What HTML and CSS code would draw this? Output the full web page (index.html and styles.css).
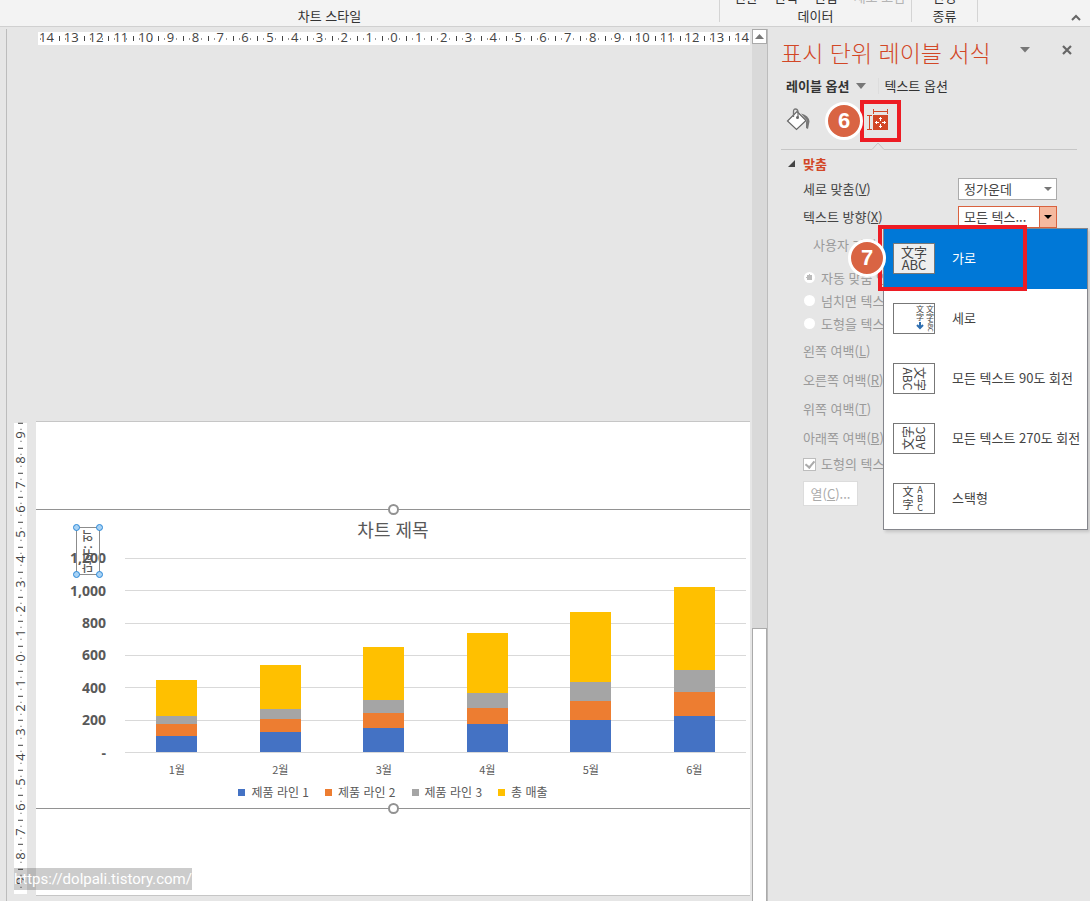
FILE: index.html
```html
<!DOCTYPE html>
<html lang="ko">
<head>
<meta charset="utf-8">
<title>표시 단위 레이블 서식</title>
<link rel="stylesheet" href="styles.css">
</head>
<body>
<header class="ribbon">
  <section class="group group-style"><span class="group-name">차트 스타일</span></section>
  <section class="group group-data">
    <div class="commands"><span>전환</span><span>선택</span><span>편집</span><span class="off">새로 고침</span></div>
    <span class="group-name">데이터</span>
  </section>
  <section class="group group-type">
    <div class="commands"><span>변경</span></div>
    <span class="group-name">종류</span>
  </section>
  <div class="ribbon-end">
    <button class="icon-button" aria-label="리본 메뉴 축소"><svg width="10" height="8" viewBox="0 0 10 8"><path d="M1 6l4-4 4 4" fill="none" stroke="#666" stroke-width="2"/></svg></button>
  </div>
</header>

<div class="workspace">
  <main class="editor">
    <div class="canvas">
      <div class="ruler-h"><div class="ruler-h-scale">
        <span>14</span><span>13</span><span>12</span><span>11</span><span>10</span><span>9</span><span>8</span><span>7</span><span>6</span><span>5</span><span>4</span><span>3</span><span>2</span><span>1</span><span>0</span><span>1</span><span>2</span><span>3</span><span>4</span><span>5</span><span>6</span><span>7</span><span>8</span><span>9</span><span>10</span><span>11</span><span>12</span><span>13</span><span>14</span>
      </div></div>
      <div class="stage">
        <div class="ruler-v">
          <span>9</span><span>8</span><span>7</span><span>6</span><span>5</span><span>4</span><span>3</span><span>2</span><span>1</span><span>0</span><span>1</span><span>2</span><span>3</span><span>4</span><span>5</span><span>6</span><span>7</span><span>8</span><span>9</span>
        </div>
        <div class="slide">
          <figure class="chart">
            <i class="grip grip-top"></i><i class="grip grip-bottom"></i>
            <figcaption class="chart-title">차트 제목</figcaption>
            <div class="plot">
              <div class="y-axis"><span>1,200</span><span>1,000</span><span>800</span><span>600</span><span>400</span><span>200</span><span>-</span></div>
              <div class="lines"><i></i><i></i><i></i><i></i><i></i><i></i></div>
              <div class="bars">
                <div class="bar"><i class="total" style="height:36px"></i><i class="line3" style="height:8px"></i><i class="line2" style="height:12px"></i><i class="line1" style="height:16px"></i></div>
                <div class="bar"><i class="total" style="height:44px"></i><i class="line3" style="height:10px"></i><i class="line2" style="height:13px"></i><i class="line1" style="height:20px"></i></div>
                <div class="bar"><i class="total" style="height:53px"></i><i class="line3" style="height:13px"></i><i class="line2" style="height:15px"></i><i class="line1" style="height:24px"></i></div>
                <div class="bar"><i class="total" style="height:60px"></i><i class="line3" style="height:15px"></i><i class="line2" style="height:16px"></i><i class="line1" style="height:28px"></i></div>
                <div class="bar"><i class="total" style="height:70px"></i><i class="line3" style="height:19px"></i><i class="line2" style="height:19px"></i><i class="line1" style="height:32px"></i></div>
                <div class="bar"><i class="total" style="height:83px"></i><i class="line3" style="height:22px"></i><i class="line2" style="height:24px"></i><i class="line1" style="height:36px"></i></div>
              </div>
              <div class="x-axis"><span>1월</span><span>2월</span><span>3월</span><span>4월</span><span>5월</span><span>6월</span></div>
            </div>
            <ul class="legend">
              <li><i class="line1"></i>제품 라인 1</li><li><i class="line2"></i>제품 라인 2</li><li><i class="line3"></i>제품 라인 3</li><li><i class="total"></i>총 매출</li>
            </ul>
            <div class="unit-label"><span>단위: 억</span><i class="knob tl"></i><i class="knob tr"></i><i class="knob bl"></i><i class="knob br"></i></div>
          </figure>
        </div>
      </div>
      <a class="watermark" href="https://dolpali.tistory.com/">https://dolpali.tistory.com/</a>
    </div>
    <div class="scrollbar">
      <button class="scroll-up" aria-label="위로"><svg width="9" height="5" viewBox="0 0 9 5"><path d="M0 5l4.500-5L9 5z" fill="#777"/></svg></button>
      <div class="thumb"></div>
    </div>
  </main>

  <aside class="pane">
    <div class="pane-head">
      <h1>표시 단위 레이블 서식</h1>
      <button class="icon-button" aria-label="작업 창 옵션"><svg width="10" height="6" viewBox="0 0 10 6"><path d="M0 0h10L5 5.500z" fill="#777"/></svg></button>
      <button class="icon-button close" aria-label="닫기"><svg width="10" height="10" viewBox="0 0 10 10"><path d="M1 1l8 8M9 1l-8 8" stroke="#666" stroke-width="2.200"/></svg></button>
    </div>
    <nav class="tabs">
      <button class="tab active">레이블 옵션 <svg width="10" height="6" viewBox="0 0 10 6"><path d="M0 0h10L5 6z" fill="#777"/></svg></button>
      <button class="tab">텍스트 옵션</button>
    </nav>
    <div class="tools">
      <button class="icon-button" aria-label="채우기 및 선"><svg width="24" height="24" viewBox="0 0 24 24"><path d="M11 3.500L20 12.500l-9.500 9L1.500 13z" fill="#fff" stroke="#666" stroke-width="1.200"/><path d="M7.500 9V3.500Q7.500 1 9.500 1t2.500 2.500V9" fill="none" stroke="#777" stroke-width="1.300"/><circle cx="11.500" cy="9.500" r="1.500" fill="#666"/><path d="M15 5.500q8 2 8.500 8l-1.500 7.500-2-1v-6.500l1-1z" fill="#777"/></svg></button>
      <span class="badge">6</span>
      <button class="icon-button marked" aria-label="크기 및 속성"><svg width="22" height="22" viewBox="0 0 22 22"><path d="M6.500 0v5M20.500 0v5M7 2.500h13M0 6.500h5M0 20.500h5M2.500 7v13" fill="none" stroke="#d24726"/><rect x="6" y="6" width="15" height="15" fill="#d24726"/><path d="M13.500 8v4M13.500 15v4M8 13.500h4M15 13.500h4M12 9.500h3M12 17.500h3M9.500 12v3M17.500 12v3" fill="none" stroke="#fff"/></svg></button>
    </div>
    <div class="divider"><svg width="14" height="8" viewBox="0 0 14 8"><path d="M1 7.500L7 1l6 6.500" fill="#e6e6e6" stroke="#c6c6c6"/><path d="M1.500 8h11" stroke="#e6e6e6"/></svg></div>
    <h2><svg width="8" height="8" viewBox="0 0 8 8"><path d="M7 0v7H0z" fill="#444"/></svg>맞춤</h2>
    <form class="fields">
      <div class="field">
        <label for="valign">세로 맞춤(<u>V</u>)</label>
        <div class="picker"><select id="valign"><option>정가운데</option></select></div>
      </div>
      <div class="field">
        <label for="direction">텍스트 방향(<u>X</u>)</label>
        <div class="picker open">
          <select id="direction"><option>모든 텍스...</option></select>
          <div class="menu" role="listbox" aria-label="텍스트 방향">
            <button type="button" class="choice selected" role="option"><svg width="42" height="31" viewBox="0 0 42 31"><rect x=".5" y=".5" width="41" height="30"/><text x="21" y="14" font-size="13">文字</text><text x="21" y="27" font-size="13">ABC</text></svg>가로</button>
            <button type="button" class="choice" role="option"><svg width="42" height="31" viewBox="0 0 42 31"><rect x=".5" y=".5" width="41" height="30"/><text x="27" y="9" font-size="8">文</text><text x="27" y="17" font-size="8">字</text><text x="37" y="9" font-size="8">文</text><text x="37" y="17" font-size="8">字</text><text transform="translate(35 23) rotate(90)" font-size="6">ABC</text><path d="M27 19v6M24 22l3 3 3-3" fill="none" stroke="#2f6fb0" stroke-width="2"/></svg>세로</button>
            <button type="button" class="choice" role="option"><svg width="42" height="31" viewBox="0 0 42 31"><rect x=".5" y=".5" width="41" height="30"/><text transform="translate(22 16) rotate(90)" font-size="12">文字</text><text transform="translate(10 16) rotate(90)" font-size="12">ABC</text></svg>모든 텍스트 90도 회전</button>
            <button type="button" class="choice" role="option"><svg width="42" height="31" viewBox="0 0 42 31"><rect x=".5" y=".5" width="41" height="30"/><text transform="translate(20 15) rotate(-90)" font-size="12">文字</text><text transform="translate(32 15) rotate(-90)" font-size="12">ABC</text></svg>모든 텍스트 270도 회전</button>
            <button type="button" class="choice" role="option"><svg width="42" height="31" viewBox="0 0 42 31"><rect x=".5" y=".5" width="41" height="30"/><text x="15" y="13" font-size="11">文</text><text x="15" y="26" font-size="11">字</text><text x="27" y="10" font-size="9">A</text><text x="27" y="19" font-size="9">B</text><text x="27" y="28" font-size="9">C</text></svg>스택형</button>
            <div class="callout"><span class="badge">7</span></div>
          </div>
        </div>
      </div>
      <div class="field off indent">사용자 지정</div>
      <div class="fit">
        <label><input type="radio" name="fit" checked disabled>자동 맞춤 안</label>
        <label><input type="radio" name="fit" disabled>넘치면 텍스트</label>
        <label><input type="radio" name="fit" disabled>도형을 텍스트</label>
      </div>
      <div class="margins">
        <span>왼쪽 여백(<u>L</u>)</span><span>오른쪽 여백(<u>R</u>)</span><span>위쪽 여백(<u>T</u>)</span><span>아래쪽 여백(<u>B</u>)</span>
      </div>
      <label class="wrap"><input type="checkbox" checked disabled>도형의 텍스트</label>
      <button type="button" class="columns" disabled>열(<u>C</u>)...</button>
    </form>
  </aside>
</div>
</body>
</html>
```
FILE: styles.css
```css
* { box-sizing: border-box; }

body {
  margin: 0;
  height: 100vh;
  display: flex;
  flex-direction: column;
  overflow: hidden;
  background: #e6e6e6;
  color: #444;
  font: 13px/20px "Noto Sans CJK KR", sans-serif;
}

button, select, input { font: inherit; color: inherit; margin: 0; }
button { padding: 0; border: 0; background: none; }
svg { display: block; flex: none; }
i { display: block; }

.icon-button { display: flex; }

/* Ribbon */
.ribbon {
  flex: none;
  display: flex;
  height: 27px;
  overflow: hidden;
  background: #f3f3f3;
  border-bottom: 1px solid #d0d0d0;
  color: #333;
}
.group {
  display: flex;
  flex-direction: column;
  justify-content: flex-end;
  align-items: center;
  margin-bottom: 4px;
  border-right: 1px solid #d4d4d4;
}
.group-name { line-height: 12px; }
.commands { display: flex; gap: 16px; margin-bottom: 3px; line-height: 20px; white-space: nowrap; }
.commands .off { color: #b4b4b4; }
.group-style { flex: 1; padding-right: 60px; }
.group-data { width: 192px; }
.group-data .commands { padding-left: 8px; }
.group-type { width: 66px; }
.ribbon-end { width: 112px; display: flex; justify-content: flex-end; align-items: flex-end; padding: 0 9px 4px 0; }

.workspace { flex: 1; display: flex; min-height: 0; }

/* Editor */
.editor {
  flex: 1;
  display: flex;
  min-width: 0;
  margin: 2px 0 0 6px;
  border: solid #bcbcbc;
  border-width: 0 1px;
}
.canvas {
  flex: 1;
  min-width: 0;
  position: relative;
  display: flex;
  flex-direction: column;
  justify-content: space-between;
  padding: 3px 2px 5px 7px;
}
.ruler-h { margin-left: 24px; height: 13px; overflow: hidden; background: #fff; }
.ruler-h-scale { display: grid; grid-template-columns: repeat(29, 1fr); margin: 0 -4px; }
.ruler-h span, .ruler-v span {
  display: flex;
  align-items: center;
  justify-content: center;
  font: 13px/13px "Open Sans", sans-serif;
}
.ruler-h span {
  height: 13px;
  padding-bottom: 2px;
  background:
    linear-gradient(#444, #444) 0 4px / 1px 5px no-repeat,
    linear-gradient(#999, #999) 25% 6px / 1px 2px no-repeat,
    linear-gradient(#999, #999) 75% 6px / 1px 2px no-repeat;
}
.stage { display: flex; gap: 9px; }
.ruler-v {
  width: 13px;
  margin: 2px 0 2px;
  display: grid;
  grid-template-rows: repeat(19, 1fr);
  background: #fff;
}
.ruler-v span {
  min-height: 0;
  writing-mode: vertical-rl;
  transform: rotate(180deg);
  background:
    linear-gradient(#444, #444) 4px 100% / 5px 1px no-repeat,
    linear-gradient(#999, #999) 5px 25% / 2px 1px no-repeat,
    linear-gradient(#999, #999) 5px 75% / 2px 1px no-repeat;
}
.slide {
  flex: 1;
  min-width: 0;
  padding: 87px 0 86px;
  background: #fff;
  border: solid #c6c6c6;
  border-width: 1px 0;
}

/* Chart */
.chart {
  position: relative;
  margin: 0;
  padding: 9px 4px 9px 34px;
  border: solid #929292;
  border-width: 1px 0;
  color: #595959;
}
.grip {
  position: absolute;
  left: calc(50% - 5px);
  width: 11px;
  height: 11px;
  border: 2px solid #929292;
  border-radius: 50%;
  background: #fff;
}
.grip-top { top: -6px; }
.grip-bottom { bottom: -6px; }
.chart-title { margin: 0 0 19px -30px; font-size: 18px; line-height: 20px; text-align: center; }
.plot { display: grid; grid-template: 195px 32px / 35px 1fr; column-gap: 20px; }
.y-axis {
  grid-area: 1 / 1;
  margin: -16px 0;
  display: grid;
  grid-template-rows: repeat(7, 1fr);
  align-items: center;
  justify-items: end;
  font: bold 14px/16px "Open Sans", sans-serif;
}
.lines { grid-area: 1 / 2; display: grid; grid-template-rows: repeat(6, 1fr); border-bottom: 1px solid #d9d9d9; }
.lines i { border-top: 1px solid #d9d9d9; }
.bars { grid-area: 1 / 2; display: grid; grid-template-columns: repeat(6, 1fr); justify-items: center; align-items: end; padding-bottom: 1px; }
.bar { width: 40%; }
.line1 { background: #4472c4; }
.line2 { background: #ed7d31; }
.line3 { background: #a5a5a5; }
.total { background: #ffc000; }
.x-axis { grid-area: 2 / 2; display: grid; grid-template-columns: repeat(6, 1fr); align-items: center; text-align: center; font-size: 11px; }
.legend { display: flex; justify-content: center; gap: 16px; margin: 0 0 0 -30px; padding: 0; list-style: none; font-size: 12px; line-height: 14px; }
.legend li { display: flex; align-items: center; gap: 6px; }
.legend i { width: 7px; height: 7px; }

.unit-label {
  position: absolute;
  left: 40px;
  top: 17px;
  width: 24px;
  height: 48px;
  display: grid;
  place-items: center;
  border: 1px solid #8c8c8c;
  font-size: 12px;
  line-height: 14px;
}
.unit-label span { writing-mode: vertical-rl; transform: rotate(180deg); font-weight: 500; white-space: nowrap; }
.knob { position: absolute; width: 7px; height: 7px; border: 1px solid #2b88d8; border-radius: 50%; background: #a9d3f5; }
.tl { left: -4px; top: -4px; }
.tr { right: -4px; top: -4px; }
.bl { left: -4px; bottom: -4px; }
.br { right: -4px; bottom: -4px; }

.watermark {
  position: absolute;
  left: 7px;
  bottom: 11px;
  background: rgba(0, 0, 0, .2);
  color: #fff;
  font: 15px/22px Roboto, sans-serif;
  text-decoration: none;
}

.scrollbar { width: 15px; display: flex; flex-direction: column; justify-content: space-between; background: #d9d9d9; }
.scroll-up { height: 15px; display: grid; place-items: center; border: 1px solid #aaa; background: #fff; }
.thumb { height: 273px; border: 1px solid #aaa; border-bottom: 0; background: #fff; }

/* Format pane */
.pane { flex: none; width: 322px; padding: 3px 13px 0; }
.pane-head { display: flex; align-items: center; height: 46px; padding-bottom: 6px; }
.pane-head h1 { flex: 1; margin: 4px 0 0; color: #d24726; font-size: 23px; font-weight: 300; line-height: 28px; }
.close { margin: 0 5px 0 32px; }
.tabs { display: flex; align-items: center; height: 20px; padding-left: 5px; color: #333; }
.tab { display: flex; align-items: center; gap: 7px; line-height: 16px; }
.tab + .tab { margin-left: 12px; padding-left: 5px; border-left: 1px solid #ddd; }
.active { font-weight: bold; }
.tools { display: flex; align-items: center; height: 42px; margin-top: 4px; padding-left: 5px; }
.tools > .icon-button:first-child { padding-bottom: 3px; }
.badge {
  flex: none;
  display: grid;
  place-items: center;
  width: 38px;
  height: 38px;
  border: 3px solid #fff;
  border-radius: 50%;
  background: #d96443;
  color: #fff;
  font: bold 22px/24px "Liberation Sans", sans-serif;
}
.tools .badge { margin: 0 -3px 0 15px; z-index: 1; }
.marked { width: 41px; height: 42px; align-items: center; justify-content: center; border: 4px solid #ed1c24; padding: 0 5px 2px 0; }
.divider { display: flex; align-items: flex-end; height: 8px; border-bottom: 1px solid #c6c6c6; }
.divider svg { margin: 0 0 -1px 90px; }
.pane h2 { display: flex; align-items: center; gap: 7px; height: 28px; margin: 0; padding-left: 7px; color: #d24726; font-size: 13px; font-weight: bold; }
.fields { padding-left: 22px; }
.field { display: flex; align-items: center; justify-content: space-between; height: 22px; margin: 0 20px 6px 0; }
.picker { position: relative; width: 99px; height: 22px; }
.picker select { width: 100%; height: 100%; padding: 0 16px 2px 5px; border: 1px solid #ababab; border-radius: 0; background: #fff; appearance: none; }
.picker::after { content: ""; position: absolute; right: 5px; top: 9px; border: 4px solid transparent; border-top: 4px solid #777; border-bottom: 0; }
.open select { border-color: #d9623f; background: linear-gradient(90deg, #fff 80px, #d9623f 80px 81px, #f5b99f 81px); }
.open::after { border-top-color: #000; }
.indent { padding-left: 10px; }
.off, .fit, .margins, .wrap, .columns { color: #9a9a9a; }
.fit { margin-top: 10px; }
.fit label, .wrap { display: flex; align-items: center; gap: 5px; height: 23px; }
.fit input { appearance: none; width: 11px; height: 11px; margin: 0 1px; border-radius: 50%; background: #fff; }
.fit input:checked { background: radial-gradient(#bbb 3px, #fff 3px); }
.margins { display: grid; grid-auto-rows: 29px; align-items: center; padding-top: 1px; }
.wrap { height: 24px; }
.wrap input { appearance: none; width: 13px; height: 13px; border: 1px solid #bdbdbd; background: #fff; position: relative; }
.wrap input::after { content: ""; position: absolute; left: 3px; top: 0; width: 4px; height: 7px; border: solid #aaa; border-width: 0 2px 2px 0; transform: rotate(40deg); }
.columns { width: 55px; height: 25px; margin-top: 5px; border: 1px solid #dcdcdc; background: #fff; color: #aaa; line-height: 20px; }

/* Direction menu */
.menu {
  position: absolute;
  z-index: 2;
  top: 100%;
  right: -31px;
  width: 205px;
  border: 1px solid #85868c;
  background: #fff;
  box-shadow: 2px 2px 3px rgba(0, 0, 0, .15);
}
.choice { display: flex; align-items: center; gap: 17px; width: 100%; height: 60px; padding: 0 0 2px 9px; white-space: nowrap; }
.choice rect { fill: #fff; stroke: #777; }
.choice text { fill: #444; text-anchor: middle; font-family: "Noto Sans CJK KR", sans-serif; }
.selected { background: #0078d7; color: #fff; }
.selected rect { fill: #eee; }
.callout { position: absolute; left: -6px; top: -4px; width: 149px; height: 66px; border: 4px solid #ed1c24; }
.callout .badge { position: absolute; right: 137px; top: 10px; }
```
